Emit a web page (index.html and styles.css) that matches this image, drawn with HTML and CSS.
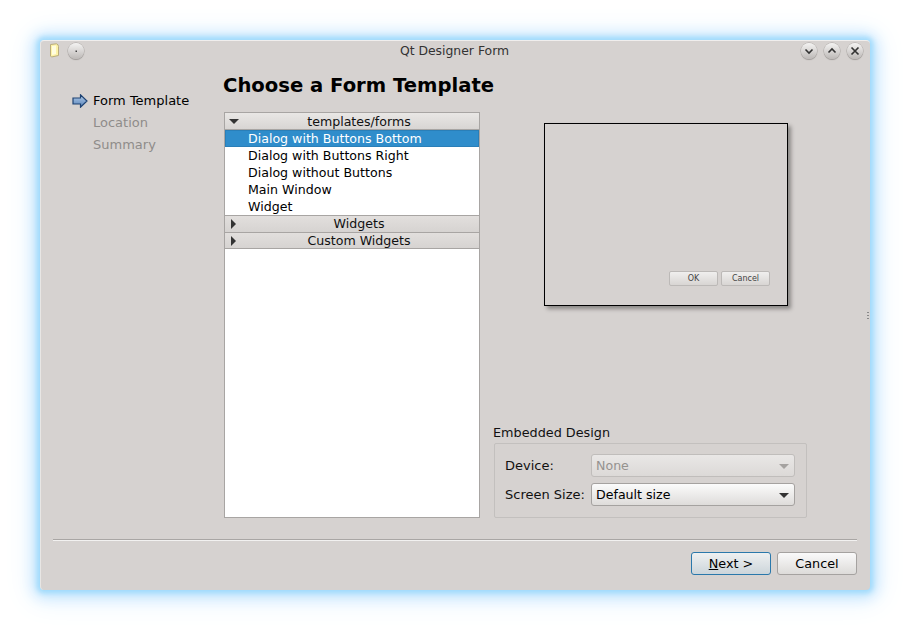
FILE: index.html
```html
<!DOCTYPE html>
<html>
<head>
<meta name="viewport" content="width=device-width, initial-scale=1">
<link rel="stylesheet" href="styles.css">
</head>
<body>

<div class="window">
  <div class="titlebar">
    <div class="title-left">
      <svg class="file-icon" width="11" height="15" viewBox="0 0 11 15">
        <path d="M1.5 1.5 L7.5 0.8 Q9.5 1.5 9.5 3.5 L9.5 12.5 L2.5 14 L1.5 13 Z" fill="#fdf3a8" stroke="#b9ac7c" stroke-width="1"/>
        <path d="M3 3 L7 2.5 L7 11 L3 12 Z" fill="#fffde0"/>
      </svg>
      <span class="win-btn">
        <svg width="16" height="16" viewBox="0 0 16 16"><rect x="7.5" y="7.5" width="1.5" height="1.5" fill="#444"/></svg>
      </span>
    </div>
    <div class="title-text">Qt Designer Form</div>
    <div class="title-right">
      <span class="win-btn">
        <svg width="16" height="16" viewBox="0 0 16 16"><path d="M4.5 6.5 L8 10 L11.5 6.5" fill="none" stroke="#333" stroke-width="1.6"/></svg>
      </span>
      <span class="win-btn">
        <svg width="16" height="16" viewBox="0 0 16 16"><path d="M4.5 9.5 L8 6 L11.5 9.5" fill="none" stroke="#333" stroke-width="1.6"/></svg>
      </span>
      <span class="win-btn">
        <svg width="16" height="16" viewBox="0 0 16 16"><path d="M4.5 4.5 L11.5 11.5 M11.5 4.5 L4.5 11.5" fill="none" stroke="#333" stroke-width="1.7"/></svg>
      </span>
    </div>
  </div>

  <div class="content">
    <div class="steps">
      <div class="step active">
        <svg class="step-arrow" width="16" height="14" viewBox="0 0 16 14">
          <defs>
            <linearGradient id="arrowFill" x1="0" y1="0" x2="0" y2="1">
              <stop offset="0" stop-color="#b7cfea"/>
              <stop offset="1" stop-color="#5380b8"/>
            </linearGradient>
          </defs>
          <path d="M1 4 L8.5 4 L8.5 0.8 L15 7 L8.5 13.2 L8.5 10 L1 10 Z" fill="url(#arrowFill)" stroke="#1f4373" stroke-width="1.2"/>
        </svg>
        <span>Form Template</span>
      </div>
      <div class="step">Location</div>
      <div class="step">Summary</div>
    </div>

    <div class="page">
      <h1 class="page-title">Choose a Form Template</h1>
      <div class="columns">
        <div class="tree">
          <div class="tree-head"><span class="tri-down"></span>templates/forms</div>
          <div class="tree-row selected"><span>Dialog with Buttons Bottom</span></div>
          <div class="tree-row"><span>Dialog with Buttons Right</span></div>
          <div class="tree-row"><span>Dialog without Buttons</span></div>
          <div class="tree-row"><span>Main Window</span></div>
          <div class="tree-row last"><span>Widget</span></div>
          <div class="tree-head closed"><span class="tri-right"></span>Widgets</div>
          <div class="tree-head closed"><span class="tri-right"></span>Custom Widgets</div>
        </div>

        <div class="side">
          <div class="preview">
            <div class="preview-buttons">
              <span class="mini-btn">OK</span>
              <span class="mini-btn">Cancel</span>
            </div>
          </div>
          <div class="group-label">Embedded Design</div>
          <div class="group">
            <div class="group-row">
              <span class="group-name">Device:</span>
              <div class="combo disabled">None<span class="combo-tri"></span></div>
            </div>
            <div class="group-row">
              <span class="group-name">Screen Size:</span>
              <div class="combo">Default size<span class="combo-tri"></span></div>
            </div>
          </div>
        </div>
      </div>
    </div>
  </div>

  <div class="separator"></div>
  <div class="footer">
    <button class="btn default"><u>N</u>ext &gt;</button>
    <button class="btn">Cancel</button>
  </div>
  <div class="grip"></div>
</div>

</body>
</html>
```

FILE: styles.css
```css
* {
  box-sizing: border-box;
}

html, body {
  margin: 0;
  height: 100%;
  background: #fff;
  overflow: hidden;
}

body {
  padding: 40px;
  font-family: "DejaVu Sans", sans-serif;
  font-size: 13px;
  color: #000;
}

.window {
  position: relative;
  width: 830px;
  height: 550px;
  background: #d6d2d0;
  border-radius: 4px;
  box-shadow: 0 0 5px 3px #a0dbfc, 0 1px 14px 6px #bfe4fd, 0 2px 28px 9px #e6f3fe;
  display: flex;
  flex-direction: column;
  border-top: 1px solid #f0eeed;
  border-left: 1px solid #e8e6e4;
}

.titlebar {
  height: 22px;
  flex: none;
  display: flex;
  align-items: center;
  justify-content: space-between;
  padding: 0 7px 3px 8px;
  position: relative;
}

.title-left, .title-right {
  display: flex;
  align-items: center;
}

.title-left {
  gap: 8px;
}

.title-right {
  gap: 7px;
}

.title-text {
  position: absolute;
  left: 0;
  right: 2px;
  top: 0;
  line-height: 19px;
  text-align: center;
  font-size: 12.4px;
  color: #333;
}

.win-btn {
  width: 16px;
  height: 16px;
  border-radius: 50%;
  background: linear-gradient(#f4f3f2, #bdb9b7);
  box-shadow: 0 0 0 0.5px #a9a5a3, 0 1px 1px #9a9694;
  display: block;
}

.win-btn svg {
  display: block;
}

.file-icon {
  display: block;
}

.content {
  display: flex;
  flex: none;
  height: 476px;
}

.steps {
  width: 182px;
  padding: 27px 0 0 31px;
  flex: none;
}

.step {
  height: 22px;
  line-height: 22px;
  padding-left: 21px;
  color: #8f8c8a;
}

.step.active {
  color: #000;
  padding-left: 0;
  display: flex;
  align-items: center;
  gap: 5px;
}

.step-arrow {
  display: block;
}

.page {
  flex: 1;
}

.page-title {
  margin: 0;
  height: 49px;
  padding-top: 11px;
  font-size: 19.6px;
  line-height: 24px;
  font-weight: bold;
  color: #000;
}

.columns {
  display: flex;
}

.tree {
  width: 256px;
  height: 406px;
  margin-left: 1px;
  background: #fff;
  border: 1px solid #a8a5a3;
  flex: none;
  font-size: 12.6px;
}

.tree-head {
  height: 17px;
  line-height: 17px;
  text-align: center;
  padding-left: 14px;
  background: linear-gradient(#e9e7e5, #d8d5d3);
  border-bottom: 1px solid #a8a5a3;
  position: relative;
  color: #111;
}

.tree-head.closed {
  line-height: 16px;
  background: linear-gradient(#e2dfdd, #d6d3d1);
}

.tree-head.closed:last-child {
  height: 16px;
}

.tri-down {
  position: absolute;
  left: 4px;
  top: 6px;
  border-left: 5px solid transparent;
  border-right: 5px solid transparent;
  border-top: 5px solid #333;
}

.tri-right {
  position: absolute;
  left: 6px;
  top: 3px;
  border-top: 5px solid transparent;
  border-bottom: 5px solid transparent;
  border-left: 5px solid #333;
}

.tree-row {
  height: 17px;
  line-height: 17px;
  padding-left: 23px;
  color: #000;
}

.tree-row.last {
  border-bottom: 1px solid #a8a5a3;
  height: 18px;
}

.tree-row.selected {
  background: #2f8dcb;
  color: #fff;
  box-shadow: inset 0 0 0 1px #2a7fb8;
}

.side {
  margin-left: 13px;
  width: 315px;
  height: 406px;
  display: flex;
  flex-direction: column;
}

.preview {
  width: 244px;
  height: 183px;
  margin: 11px 0 0 51px;
  background: #d6d2d0;
  border: 1px solid #000;
  box-shadow: 3px 3px 4px #8b8886;
  padding: 147px 17px 0 0;
  flex: none;
}

.preview-buttons {
  display: flex;
  justify-content: flex-end;
  gap: 3px;
}

.mini-btn {
  width: 49px;
  height: 15px;
  line-height: 13px;
  text-align: center;
  font-size: 8px;
  color: #444;
  background: linear-gradient(#f0efee, #d8d5d3);
  border: 1px solid #bcb9b7;
  border-radius: 2px;
}

.group-label {
  margin-top: 118px;
  height: 19px;
  line-height: 18px;
  font-size: 12.8px;
  color: #111;
}

.group {
  margin-left: 1px;
  width: 313px;
  height: 75px;
  border: 1px solid #c3c0be;
  border-radius: 2px;
  padding: 10px 11px 0 10px;
}

.group-row {
  display: flex;
  align-items: center;
  justify-content: space-between;
  margin-bottom: 6px;
}

.group-name {
  color: #111;
}

.combo {
  width: 204px;
  height: 23px;
  line-height: 21px;
  padding-left: 4px;
  font-size: 12.6px;
  border: 1px solid #a5a2a0;
  border-radius: 3px;
  background: linear-gradient(#fbfbfb, #dedcda);
  position: relative;
  color: #000;
}

.combo.disabled {
  color: #95928f;
  border-color: #c0bdbb;
  background: linear-gradient(#e9e7e6, #dcd9d7);
}

.combo-tri {
  position: absolute;
  right: 5px;
  top: 9px;
  border-left: 5px solid transparent;
  border-right: 5px solid transparent;
  border-top: 5px solid #333;
}

.combo.disabled .combo-tri {
  border-top-color: #a5a2a0;
}

.separator {
  height: 2px;
  margin: 0 13px 0 12px;
  flex: none;
  background: #a9a6a4;
  border-bottom: 1px solid #f2f1f0;
}

.footer {
  display: flex;
  justify-content: flex-end;
  gap: 6px;
  padding: 11px 13px 0 0;
}

.btn {
  width: 80px;
  height: 23px;
  padding: 0;
  font-family: "DejaVu Sans", sans-serif;
  font-size: 12.8px;
  color: #000;
  border: 1px solid #a5a2a0;
  border-radius: 3px;
  background: linear-gradient(#fafafa, #dddbd9);
}

.btn.default {
  border-color: #2a78ab;
  background: linear-gradient(#eef0f1, #ccd5da);
}

.grip {
  position: absolute;
  right: 1px;
  top: 271px;
  width: 2px;
  height: 8px;
  background: repeating-linear-gradient(#888 0 1px, transparent 1px 3px);
}
```
